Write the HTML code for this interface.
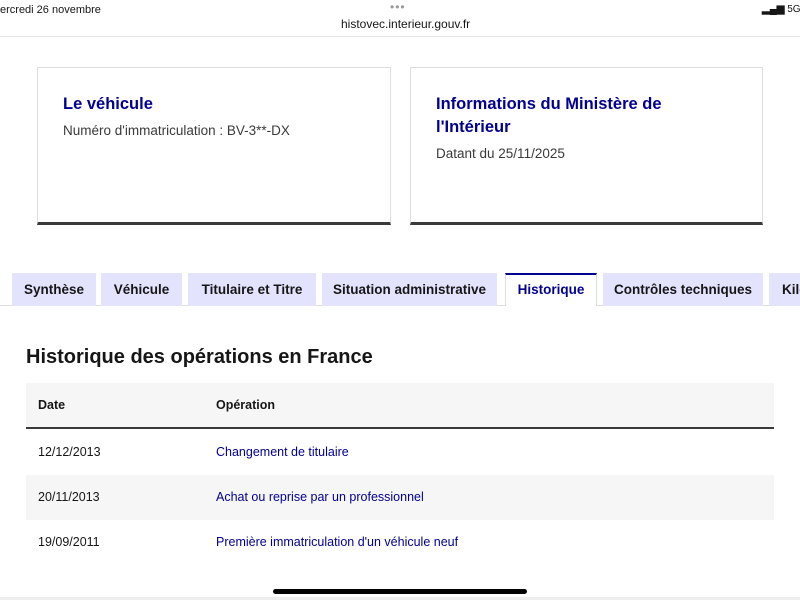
<!DOCTYPE html>
<html><head><meta charset="utf-8"><style>
*{margin:0;padding:0;box-sizing:border-box}
body{width:800px;height:600px;overflow:hidden;background:#fff;font-family:"Liberation Sans",sans-serif;color:#161616;position:relative}
.a{position:absolute;white-space:nowrap}
.card{position:absolute;top:67px;height:158px;border:1px solid #ddd;border-bottom:3px solid #3a3a3a;background:#fff}
.ct{color:#000091;font-size:16.5px;font-weight:bold;line-height:23px}
.cs{color:#3a3a3a;font-size:13.5px}
.tab{position:absolute;top:273px;height:33px;background:#e3e3fd;font-size:13.5px;font-weight:bold;display:flex;align-items:center;justify-content:center;color:#161616}
.tr{position:absolute;left:26px;width:748px;height:45px;font-size:12.5px}
.tr span{position:absolute;top:15px}
.op{left:190px;color:#000091}
</style></head><body>
<div class="a" style="left:0;top:4px;font-size:11px">ercredi 26 novembre</div>
<div class="a" style="left:390px;top:0;font-size:12px;color:#999;letter-spacing:1px">•••</div>
<div class="a" style="left:341px;top:17px;font-size:12px">histovec.interieur.gouv.fr</div>
<div class="a" style="left:762px;top:4px;font-size:10px;font-weight:bold">▂▄▆ <span style="font-weight:normal">5G 6</span></div>
<div class="a" style="left:0;top:36px;width:800px;height:1px;background:#e5e5e5"></div>

<div class="card" style="left:37px;width:354px">
<div class="a ct" style="left:25px;top:25px">Le véhicule</div>
<div class="a cs" style="left:25px;top:55px">Numéro d'immatriculation : BV-3**-DX</div>
</div>
<div class="card" style="left:410px;width:353px">
<div class="a ct" style="left:25px;top:25px">Informations du Ministère de<br>l'Intérieur</div>
<div class="a cs" style="left:25px;top:78px">Datant du 25/11/2025</div>
</div>

<div class="a" style="left:0;top:305px;width:800px;height:1px;background:#ddd"></div>
<div class="tab" style="left:12px;width:84px">Synthèse</div>
<div class="tab" style="left:101px;width:81px">Véhicule</div>
<div class="tab" style="left:188px;width:128px">Titulaire et Titre</div>
<div class="tab" style="left:322px;width:175px">Situation administrative</div>
<div class="tab" style="left:505px;width:92px;background:#fff;border-top:2px solid #000091;border-left:1px solid #ddd;border-right:1px solid #ddd;color:#000091;height:33px;padding-bottom:2px">Historique</div>
<div class="tab" style="left:603px;width:160px">Contrôles techniques</div>
<div class="tab" style="left:769px;width:60px;justify-content:flex-start;padding-left:13px">Kilo</div>

<div class="a" style="left:26px;top:346px;font-size:20px;font-weight:bold">Historique des opérations en France</div>
<div class="tr" style="top:383px;background:#f6f6f6;height:46px;font-weight:bold;border-bottom:2px solid #3a3a3a"><span style="left:12px">Date</span><span style="left:190px">Opération</span></div>
<div class="tr" style="top:430px"><span style="left:12px">12/12/2013</span><span class="op">Changement de titulaire</span></div>
<div class="tr" style="top:475px;background:#f6f6f6"><span style="left:12px">20/11/2013</span><span class="op">Achat ou reprise par un professionnel</span></div>
<div class="tr" style="top:520px"><span style="left:12px">19/09/2011</span><span class="op">Première immatriculation d'un véhicule neuf</span></div>
<div class="a" style="left:273px;top:589px;width:254px;height:5px;border-radius:3px;background:#000"></div>
<div class="a" style="left:0;top:597px;width:800px;height:3px;background:#eee"></div>
</body></html>
